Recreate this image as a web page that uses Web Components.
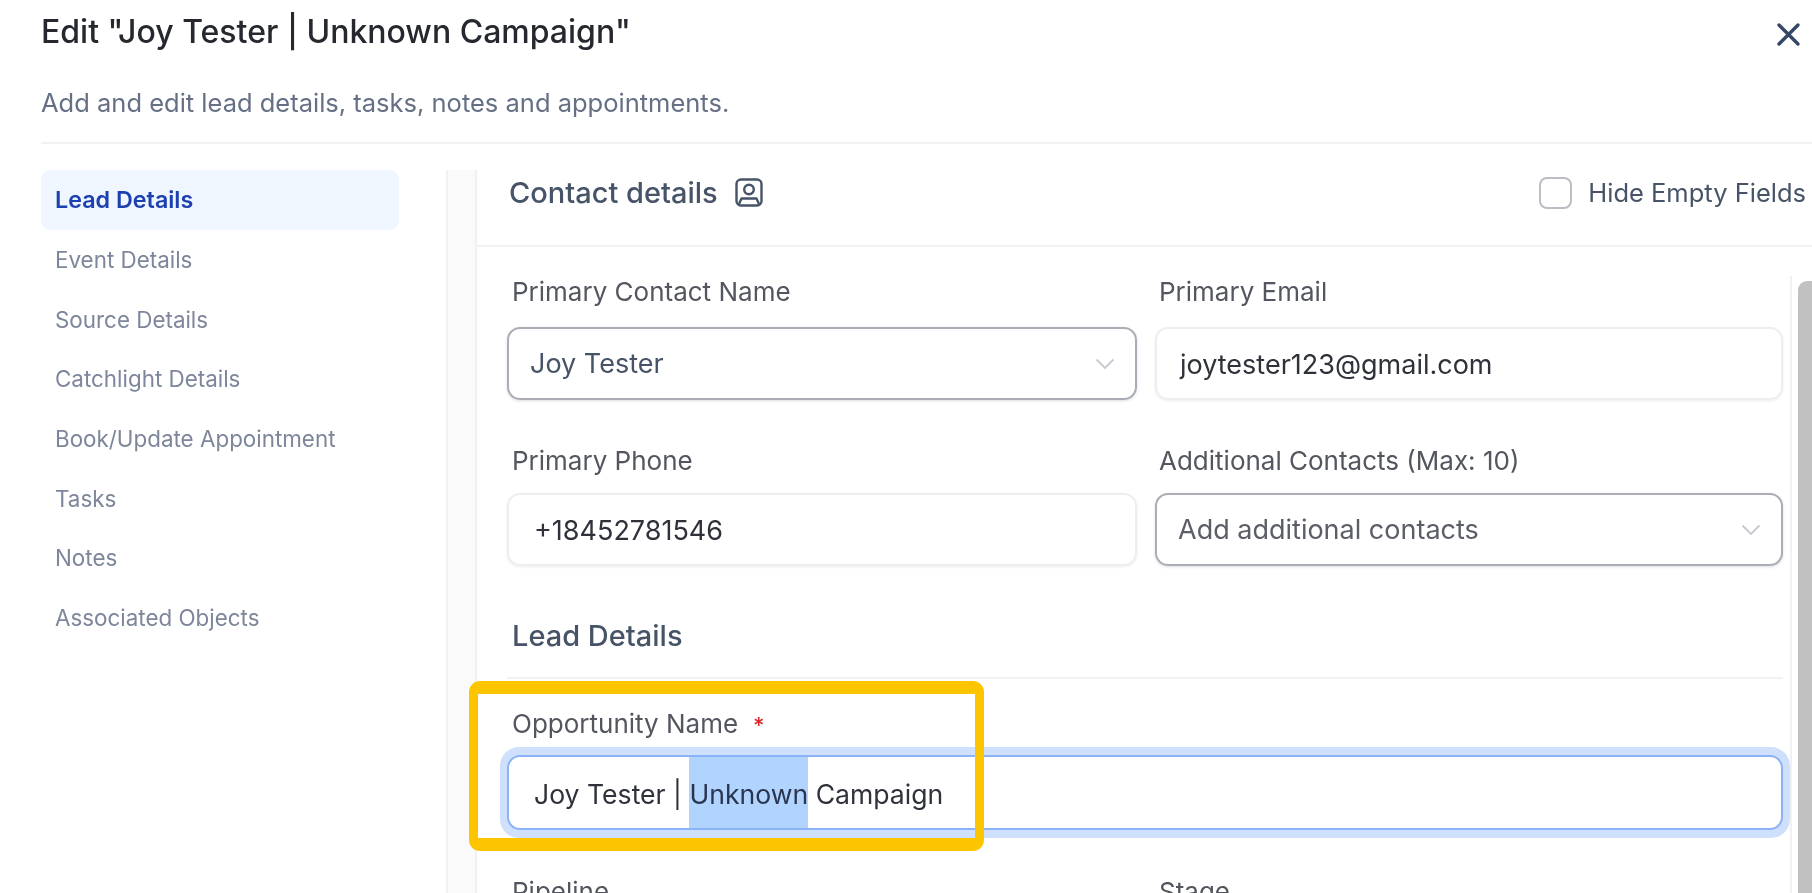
<!DOCTYPE html>
<html lang="en">
<head>
<meta charset="utf-8">
<title>Edit lead</title>
<style>
  html, body { margin: 0; height: 100%; background: #fff; overflow: hidden; }
  body { font-family: Inter, "Liberation Sans", sans-serif; }
</style>
</head>
<body>
<lead-modal>
  <modal-header slot="header"
    title-text='Edit "Joy Tester | Unknown Campaign"'
    sub-text="Add and edit lead details, tasks, notes and appointments."></modal-header>
  <side-nav slot="nav">
    <nav-item active>Lead Details</nav-item>
    <nav-item>Event Details</nav-item>
    <nav-item>Source Details</nav-item>
    <nav-item>Catchlight Details</nav-item>
    <nav-item>Book/Update Appointment</nav-item>
    <nav-item>Tasks</nav-item>
    <nav-item>Notes</nav-item>
    <nav-item>Associated Objects</nav-item>
  </side-nav>
  <contact-panel slot="content">
    <form-grid>
      <form-field label="Primary Contact Name"><select-box>Joy Tester</select-box></form-field>
      <form-field label="Primary Email" style="--label-pad:4px;--text-pad:23px"><text-box>joytester123@gmail.com</text-box></form-field>
      <form-field label="Primary Phone" style="--label-gap:17px"><text-box>+18452781546</text-box></form-field>
      <form-field label="Additional Contacts (Max: 10)" style="--label-gap:17px;--label-pad:4px"><select-box placeholder>Add additional contacts</select-box></form-field>
    </form-grid>
    <section-title>Lead Details</section-title>
    <form-field label="Opportunity Name" required style="--label-gap:16px;--box-h:75px">
      <focus-box><span>Joy Tester | </span><mark-sel>Unknown</mark-sel><span> Campaign</span></focus-box>
      <callout-frame></callout-frame>
    </form-field>
    <form-grid style="margin-top:47px">
      <form-field label="Pipeline"></form-field>
      <form-field label="Stage" style="--label-pad:4px"></form-field>
    </form-grid>
  </contact-panel>
</lead-modal>

<script>
class LeadModal extends HTMLElement {
  connectedCallback() {
    this.attachShadow({ mode: 'open' });
    this.shadowRoot.innerHTML = `
      <style>
        :host { display: flex; flex-direction: column; width: 1812px; height: 893px; overflow: hidden; background: #fff; filter: blur(.45px); }
        .body { flex: 1; min-height: 0; display: flex; padding: 26px 0 0 41px; }
        .nav { width: 358px; flex: none; }
        .band { width: 27px; flex: none; margin-left: 47px; background: #fafafb; border: solid #f1f1f4; border-width: 0 2px; }
        .content { flex: 1; min-width: 0; }
      </style>
      <slot name="header"></slot>
      <div class="body">
        <div class="nav"><slot name="nav"></slot></div>
        <div class="band"></div>
        <div class="content"><slot name="content"></slot></div>
      </div>`;
  }
}

class ModalHeader extends HTMLElement {
  connectedCallback() {
    this.attachShadow({ mode: 'open' });
    this.shadowRoot.innerHTML = `
      <style>
        :host { display: block; margin-left: 41px; height: 142px; border-bottom: 2px solid #f2f2f6; position: relative; }
        h1 { margin: 0; padding-top: 14px; font-size: 32px; line-height: 36px; font-weight: 500; color: #25282e; }
        p { margin: 35px 0 0; font-size: 25.5px; line-height: 36px; color: #667085; }
        svg { position: absolute; right: 11px; top: 22px; display: block; }
      </style>
      <h1>${this.getAttribute('title-text')}</h1>
      <p>${this.getAttribute('sub-text')}</p>
      <svg width="25" height="25" viewBox="0 0 25 25" fill="none" stroke="#344767" stroke-width="3.4" stroke-linecap="round"><path d="M3 3l19 19M22 3L3 22"/></svg>`;
  }
}

class SideNav extends HTMLElement {
  connectedCallback() {
    this.attachShadow({ mode: 'open' });
    this.shadowRoot.innerHTML = `
      <style>:host { display: flex; flex-direction: column; }</style>
      <slot></slot>`;
  }
}

class NavItem extends HTMLElement {
  connectedCallback() {
    this.attachShadow({ mode: 'open' });
    this.shadowRoot.innerHTML = `
      <style>
        :host { display: flex; align-items: center; height: 59.7px; padding-left: 14px; border-radius: 9px; font-size: 22.4px; color: #7d869a; }
        :host([active]) { background: #eff6ff; color: #1d40af; font-weight: 600; font-size: 23.3px; }
      </style>
      <slot></slot>`;
  }
}

class ContactPanel extends HTMLElement {
  connectedCallback() {
    this.attachShadow({ mode: 'open' });
    this.shadowRoot.innerHTML = `
      <style>
        :host { display: block; height: 100%; }
        header { display: flex; align-items: center; height: 77px; box-sizing: border-box; padding: 0 6px 30px 32px; border-bottom: 2px solid #f2f2f6; }
        h2 { margin: 0; font-size: 29px; font-weight: 500; color: #475467; }
        svg { margin-left: 17px; }
        label { margin-left: auto; display: flex; align-items: center; gap: 16px; font-size: 25.5px; color: #475467; }
        i { width: 33px; height: 32px; box-sizing: border-box; border: 2px solid #bcbec5; border-radius: 8px; }
        .scroll { display: flex; }
        .form { flex: 1; min-width: 0; padding: 30px 7px 0 30px; }
        .track { width: 20px; flex: none; margin-top: 29px; border-left: 2px solid #f1f1f4; padding-top: 5px; display: flex; justify-content: flex-end; }
        .thumb { width: 14px; height: 800px; background: #c1c1c1; border-radius: 9px 0 0 0; }
      </style>
      <header>
        <h2>Contact details</h2>
        <svg width="28" height="29" viewBox="0 0 28 29" fill="none" stroke="#475467" stroke-width="2.4" stroke-linejoin="round">
          <rect x="1.5" y="1.5" width="25" height="26" rx="4.5"/>
          <circle cx="14" cy="11.5" r="4.8"/>
          <path d="M4 26l2.5-5.5h15L24 26"/>
        </svg>
        <label><i></i>Hide Empty Fields</label>
      </header>
      <div class="scroll">
        <div class="form"><slot></slot></div>
        <div class="track"><div class="thumb"></div></div>
      </div>`;
  }
}

class FormGrid extends HTMLElement {
  connectedCallback() {
    this.attachShadow({ mode: 'open' });
    this.shadowRoot.innerHTML = `
      <style>:host { display: grid; grid-template-columns: 630px 628px; column-gap: 18px; row-gap: 46px; }</style>
      <slot></slot>`;
  }
}

class FormField extends HTMLElement {
  connectedCallback() {
    this.attachShadow({ mode: 'open' });
    const star = this.hasAttribute('required') ? '<b>*</b>' : '';
    this.shadowRoot.innerHTML = `
      <style>
        :host { display: block; position: relative; }
        .label { display: block; height: 30px; line-height: 30px; padding-left: var(--label-pad, 5px); margin-bottom: var(--label-gap, 20px); font-size: 26px; color: #53565f; }
        b { font-weight: 500; font-size: 22px; color: #dc2626; margin-left: 15px; }
      </style>
      <span class="label">${this.getAttribute('label')}${star}</span>
      <slot></slot>`;
  }
}

class TextBox extends HTMLElement {
  connectedCallback() {
    this.attachShadow({ mode: 'open' });
    this.shadowRoot.innerHTML = `
      <style>
        :host { display: flex; align-items: center; box-sizing: border-box; height: var(--box-h, 73px); padding: 2px var(--text-pad, 25px) 0; border: 2px solid #eeeef2; border-radius: 13px; box-shadow: 0 1px 3px rgba(16,24,40,.08); font-size: 27px; color: #2f323a; }
      </style>
      <slot></slot>`;
  }
}

class SelectBox extends HTMLElement {
  connectedCallback() {
    this.attachShadow({ mode: 'open' });
    this.shadowRoot.innerHTML = `
      <style>
        :host { display: flex; align-items: center; justify-content: space-between; box-sizing: border-box; height: var(--box-h, 73px); padding: 0 20px 0 21px; border: 2px solid #abadb6; border-radius: 13px; box-shadow: 0 1px 3px rgba(16,24,40,.14); font-size: 27px; color: #475467; }
        :host([placeholder]) { color: #5b5e67; }
      </style>
      <slot></slot>
      <svg width="20" height="12" viewBox="0 0 20 12" fill="none" stroke="#c6c9d0" stroke-width="1.8"><path d="M1.5 1.5L10 10l8.5-8.5"/></svg>`;
  }
}

class FocusBox extends HTMLElement {
  connectedCallback() {
    this.attachShadow({ mode: 'open' });
    this.shadowRoot.innerHTML = `
      <style>
        :host { display: flex; align-items: center; box-sizing: border-box; position: relative; isolation: isolate; height: var(--box-h, 75px); padding: 2px 0 0 25px; border: 2px solid transparent; font-size: 26.6px; color: #2f323a; white-space: pre; }
        .ring { position: absolute; inset: -10px -9px; border-radius: 19px; background: #cfe0fd; z-index: -2; }
        .in { position: absolute; inset: -2px; box-sizing: border-box; border: 2px solid #8cb2f8; border-radius: 13px; background: #fff; z-index: -1; }
      </style>
      <div class="ring"></div>
      <div class="in"></div>
      <slot></slot>`;
  }
}

class MarkSel extends HTMLElement {
  connectedCallback() {
    this.attachShadow({ mode: 'open' });
    this.shadowRoot.innerHTML = `
      <style>:host { display: flex; align-items: center; align-self: stretch; margin-top: -2px; padding-top: 2px; background: #b0d4fe; color: #2a3550; }</style>
      <slot></slot>`;
  }
}

class SectionTitle extends HTMLElement {
  connectedCallback() {
    this.attachShadow({ mode: 'open' });
    this.shadowRoot.innerHTML = `
      <style>
        :host { display: block; margin: 52px 0 30px; padding: 0 0 23px 5px; line-height: 36px; font-size: 29px; font-weight: 500; color: #475467; border-bottom: 2px solid #f2f2f6; }
      </style>
      <slot></slot>`;
  }
}

class CalloutFrame extends HTMLElement {
  connectedCallback() {
    this.attachShadow({ mode: 'open' });
    this.shadowRoot.innerHTML = `
      <style>
        :host { position: absolute; left: -38px; top: -28px; width: 515px; height: 170px; box-sizing: border-box; border: solid #fdc500; border-width: 13px 9px; border-radius: 11px; pointer-events: none; }
      </style>`;
  }
}

customElements.define('lead-modal', LeadModal);
customElements.define('modal-header', ModalHeader);
customElements.define('side-nav', SideNav);
customElements.define('nav-item', NavItem);
customElements.define('contact-panel', ContactPanel);
customElements.define('form-grid', FormGrid);
customElements.define('form-field', FormField);
customElements.define('text-box', TextBox);
customElements.define('select-box', SelectBox);
customElements.define('focus-box', FocusBox);
customElements.define('mark-sel', MarkSel);
customElements.define('section-title', SectionTitle);
customElements.define('callout-frame', CalloutFrame);
</script>
</body>
</html>
